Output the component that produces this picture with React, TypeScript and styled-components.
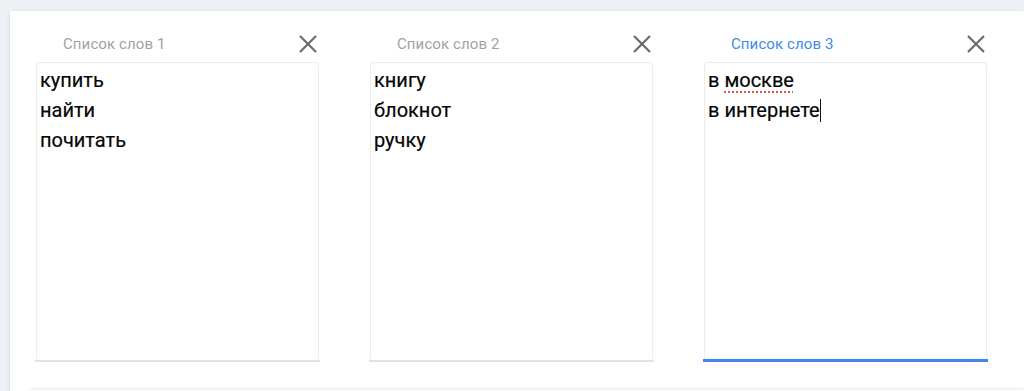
import React from "react";
import styled, { createGlobalStyle } from "styled-components";

const GlobalStyle = createGlobalStyle`
  html, body {
    margin: 0;
    padding: 0;
    background: #edf1f5;
    font-family: Roboto, "Liberation Sans", sans-serif;
    overflow: hidden;
  }
`;

const Page = styled.div`
  padding: 11px 0 0 10px;
  height: 391px;
  box-sizing: border-box;
  overflow: hidden;
`;

const Card = styled.div`
  background: #fff;
  box-shadow: 0 1px 4px rgba(0, 0, 0, 0.12);
  border-radius: 2px 0 0 0;
  padding: 23px 0 40px 26px;
`;

const Row = styled.div`
  display: flex;
  gap: 51px;
`;

const Column = styled.div`
  width: 283px;
  flex: none;
`;

const Header = styled.div`
  display: flex;
  align-items: center;
  justify-content: space-between;
  height: 20px;
  margin-bottom: 8px;
  padding-left: 27px;
`;

const Label = styled.span<{ $active?: boolean }>`
  font-size: 15px;
  letter-spacing: 0.1px;
  color: ${(p) => (p.$active ? "#3f8ae6" : "#a2a2a2")};
`;

const CloseButton = styled.button`
  border: none;
  background: none;
  padding: 0;
  margin-right: 1px;
  width: 20px;
  height: 20px;
  display: flex;
  align-items: center;
  justify-content: center;
  cursor: pointer;
`;

const TextBox = styled.div`
  height: 297px;
  box-sizing: border-box;
  border: 1px solid #ececec;
  border-bottom: none;
  border-radius: 4px 4px 0 0;
  padding: 2px 3px;
  font-size: 20px;
  line-height: 30px;
  color: #050505;
  -webkit-text-stroke: 0.2px #050505;
`;

const Line = styled.div`
  white-space: nowrap;
`;

const Misspelled = styled.span`
  text-decoration: underline dotted #e5534b;
  text-decoration-thickness: 2px;
  text-underline-offset: 4px;
`;

const Caret = styled.span`
  display: inline-block;
  width: 1px;
  height: 23px;
  background: #111;
  vertical-align: -5px;
`;

const Underline = styled.div<{ $active?: boolean }>`
  height: ${(p) => (p.$active ? "3px" : "2px")};
  margin: ${(p) => (p.$active ? "0 -1px" : "1px -1px 0")};
  background: ${(p) => (p.$active ? "#4187ec" : "#e2e2e2")};
`;

const Footer = styled.div`
  margin: 27px 0 0 -6px;
  height: 20px;
  border-top: 1px solid #f0f0f0;
  box-shadow: 0 -1px 3px rgba(0, 0, 0, 0.06);
`;

const CloseIcon = () => (
  <svg width="18" height="18" viewBox="0 0 18 18">
    <path d="M1 1 L17 17 M17 1 L1 17" stroke="#6b6b6b" strokeWidth="2.2" fill="none" />
  </svg>
);

type ListProps = {
  title: string;
  active?: boolean;
  children: React.ReactNode;
};

const WordList = ({ title, active, children }: ListProps) => (
  <Column>
    <Header>
      <Label $active={active}>{title}</Label>
      <CloseButton>
        <CloseIcon />
      </CloseButton>
    </Header>
    <TextBox>{children}</TextBox>
    <Underline $active={active} />
  </Column>
);

export default function App() {
  return (
    <Page>
      <GlobalStyle />
      <Card>
        <Row>
          <WordList title="Список слов 1">
            <Line>купить</Line>
            <Line>найти</Line>
            <Line>почитать</Line>
          </WordList>
          <WordList title="Список слов 2">
            <Line>книгу</Line>
            <Line>блокнот</Line>
            <Line>ручку</Line>
          </WordList>
          <WordList title="Список слов 3" active>
            <Line>
              в <Misspelled>москве</Misspelled>
            </Line>
            <Line>
              в интернете
              <Caret />
            </Line>
          </WordList>
        </Row>
        <Footer />
      </Card>
    </Page>
  );
}
